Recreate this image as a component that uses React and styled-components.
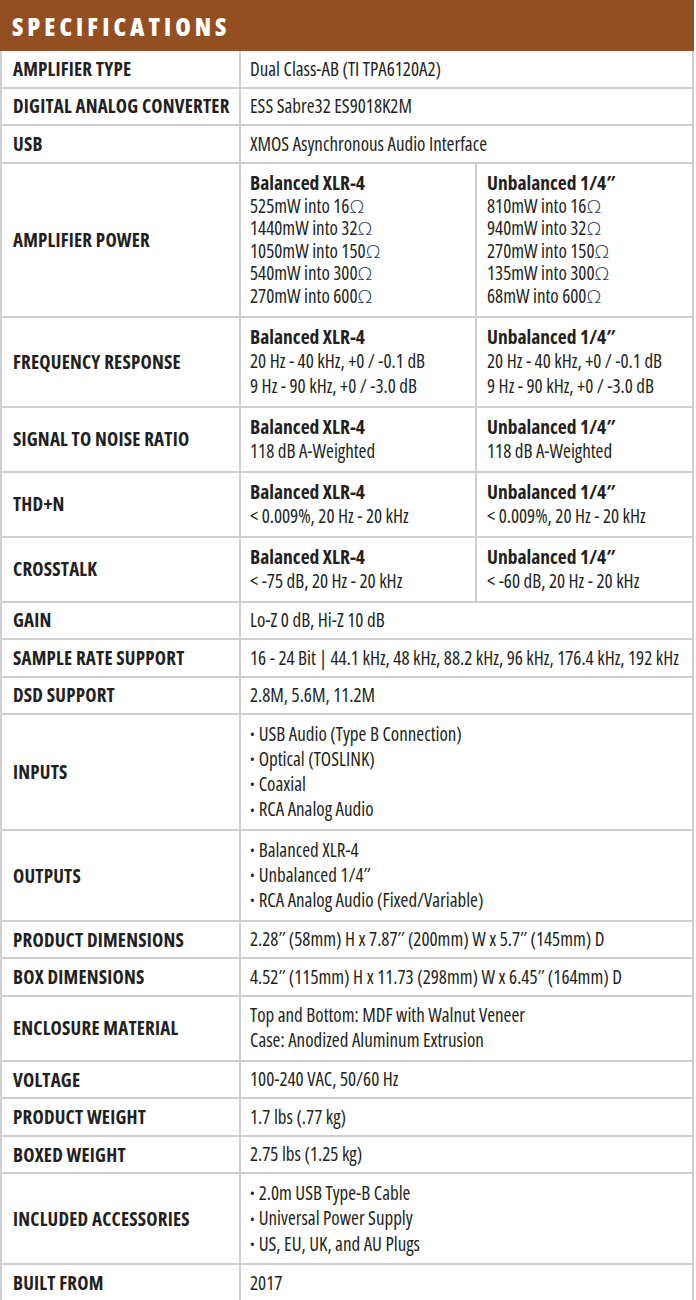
import React from "react";
import styled, { createGlobalStyle } from "styled-components";

const Global = createGlobalStyle`
  html, body { margin: 0; padding: 0; background: #ffffff; }
  body {
    font-family: "Open Sans", "Noto Sans", sans-serif;
    font-stretch: 75%;
    color: #231f20;
  }
`;

const Page = styled.div`
  width: 694px;
`;

const Header = styled.div`
  height: 51px;
  background: #934f21;
  display: flex;
  align-items: center;
  padding-left: 12px;
  box-sizing: border-box;
`;

const Title = styled.h1`
  margin: 0;
  color: #ffffff;
  font-size: 25px;
  font-weight: 800;
  letter-spacing: 4px;
  line-height: 1;
  padding-top: 2px;
`;

const Sheet = styled.div`
  display: grid;
  grid-template-columns: 237px 234px 215px;
  gap: 2px;
  padding: 0 2px 2px 2px;
  background: #cfcfd3;
`;

const Label = styled.div`
  grid-column: 1;
  background: #ffffff;
  display: flex;
  align-items: center;
  padding: 0 6px 0 11px;
  font-size: 19px;
  font-weight: 700;
  text-transform: uppercase;
  letter-spacing: 0.2px;
  white-space: nowrap;
`;

const Value = styled.div`
  grid-column: ${(p) => (p.$span ? "2 / 4" : "auto")};
  background: #ffffff;
  padding: ${(p) => p.$pad ?? 6.5}px 4px ${(p) => p.$pad ?? 6.5}px ${(p) => (p.$inner ? 10 : 9)}px;
  font-size: 19px;
  line-height: ${(p) => p.$lh ?? 25}px;
  white-space: nowrap;
  display: flex;
  flex-direction: column;
  justify-content: center;
  min-width: 0;
`;

const Line = styled.div``;

const SubTitle = styled.div`
  font-weight: 700;
  font-size: 19.5px;
`;

const Dot = styled.span`
  font-size: 0.65em;
  vertical-align: 0.14em;
  margin-right: 4px;
`;

const Ohm = styled.span`
  font-weight: 300;
  font-stretch: 100%;
  color: #26355a;
`;

const data = [
  { label: "Amplifier Type", value: ["Dual Class-AB (TI TPA6120A2)"] },
  { label: "Digital Analog Converter", value: ["ESS Sabre32 ES9018K2M"] },
  { label: "USB", value: ["XMOS Asynchronous Audio Interface"] },
  {
    label: "Amplifier Power",
    lh: 22.5,
    pad: 8.5,
    split: [
      {
        title: "Balanced XLR-4",
        lines: [
          "525mW into 16Ω",
          "1440mW into 32Ω",
          "1050mW into 150Ω",
          "540mW into 300Ω",
          "270mW into 600Ω",
        ],
      },
      {
        title: "Unbalanced 1/4″",
        lines: [
          "810mW into 16Ω",
          "940mW into 32Ω",
          "270mW into 150Ω",
          "135mW into 300Ω",
          "68mW into 600Ω",
        ],
      },
    ],
  },
  {
    label: "Frequency Response",
    split: [
      {
        title: "Balanced XLR-4",
        lines: ["20 Hz - 40 kHz, +0 / -0.1 dB", "9 Hz - 90 kHz, +0 / -3.0 dB"],
      },
      {
        title: "Unbalanced 1/4″",
        lines: ["20 Hz - 40 kHz, +0 / -0.1 dB", "9 Hz - 90 kHz, +0 / -3.0 dB"],
      },
    ],
  },
  {
    label: "Signal to Noise Ratio",
    split: [
      { title: "Balanced XLR-4", lines: ["118 dB A-Weighted"] },
      { title: "Unbalanced 1/4″", lines: ["118 dB A-Weighted"] },
    ],
  },
  {
    label: "THD+N",
    split: [
      { title: "Balanced XLR-4", lines: ["< 0.009%, 20 Hz - 20 kHz"] },
      { title: "Unbalanced 1/4″", lines: ["< 0.009%, 20 Hz - 20 kHz"] },
    ],
  },
  {
    label: "Crosstalk",
    split: [
      { title: "Balanced XLR-4", lines: ["< -75 dB, 20 Hz - 20 kHz"] },
      { title: "Unbalanced 1/4″", lines: ["< -60 dB, 20 Hz - 20 kHz"] },
    ],
  },
  { label: "Gain", value: ["Lo-Z 0 dB, Hi-Z 10 dB"] },
  {
    label: "Sample Rate Support",
    value: ["16 - 24 Bit | 44.1 kHz, 48 kHz, 88.2 kHz, 96 kHz, 176.4 kHz, 192 kHz"],
  },
  { label: "DSD Support", value: ["2.8M, 5.6M, 11.2M"] },
  {
    label: "Inputs",
    bullets: true,
    value: [
      "USB Audio (Type B Connection)",
      "Optical (TOSLINK)",
      "Coaxial",
      "RCA Analog Audio",
    ],
  },
  {
    label: "Outputs",
    bullets: true,
    value: ["Balanced XLR-4", "Unbalanced 1/4″", "RCA Analog Audio (Fixed/Variable)"],
  },
  {
    label: "Product Dimensions",
    value: ["2.28″ (58mm) H x 7.87″ (200mm) W x 5.7″ (145mm) D"],
  },
  {
    label: "Box Dimensions",
    value: ["4.52″ (115mm) H x 11.73 (298mm) W x 6.45″ (164mm) D"],
  },
  {
    label: "Enclosure Material",
    value: ["Top and Bottom: MDF with Walnut Veneer", "Case: Anodized Aluminum Extrusion"],
  },
  { label: "Voltage", value: ["100-240 VAC, 50/60 Hz"] },
  { label: "Product Weight", value: ["1.7 lbs (.77 kg)"] },
  { label: "Boxed Weight", value: ["2.75 lbs (1.25 kg)"] },
  {
    label: "Included Accessories",
    bullets: true,
    value: ["2.0m USB Type-B Cable", "Universal Power Supply", "US, EU, UK, and AU Plugs"],
  },
  { label: "Built From", value: ["2017"] },
];

function Text({ children }) {
  if (!children.endsWith("Ω")) return children;
  return (
    <>
      {children.slice(0, -1)}
      <Ohm>Ω</Ohm>
    </>
  );
}

function Cell({ row }) {
  if (row.split) {
    return row.split.map((s, i) => (
      <Value key={i} $inner={i === 1} $lh={row.lh} $pad={row.pad}>
        <SubTitle>{s.title}</SubTitle>
        {s.lines.map((l) => (
          <Line key={l}>
            <Text>{l}</Text>
          </Line>
        ))}
      </Value>
    ));
  }
  const single = row.value.length === 1;
  return (
    <Value $span $lh={single ? 22.5 : 25}>
      {row.value.map((l) => (
        <Line key={l}>
          {row.bullets && <Dot>•</Dot>}
          {l}
        </Line>
      ))}
    </Value>
  );
}

export default function App() {
  return (
    <Page>
      <Global />
      <Header>
        <Title>SPECIFICATIONS</Title>
      </Header>
      <Sheet>
        {data.map((row) => (
          <React.Fragment key={row.label}>
            <Label>{row.label}</Label>
            <Cell row={row} />
          </React.Fragment>
        ))}
      </Sheet>
    </Page>
  );
}
